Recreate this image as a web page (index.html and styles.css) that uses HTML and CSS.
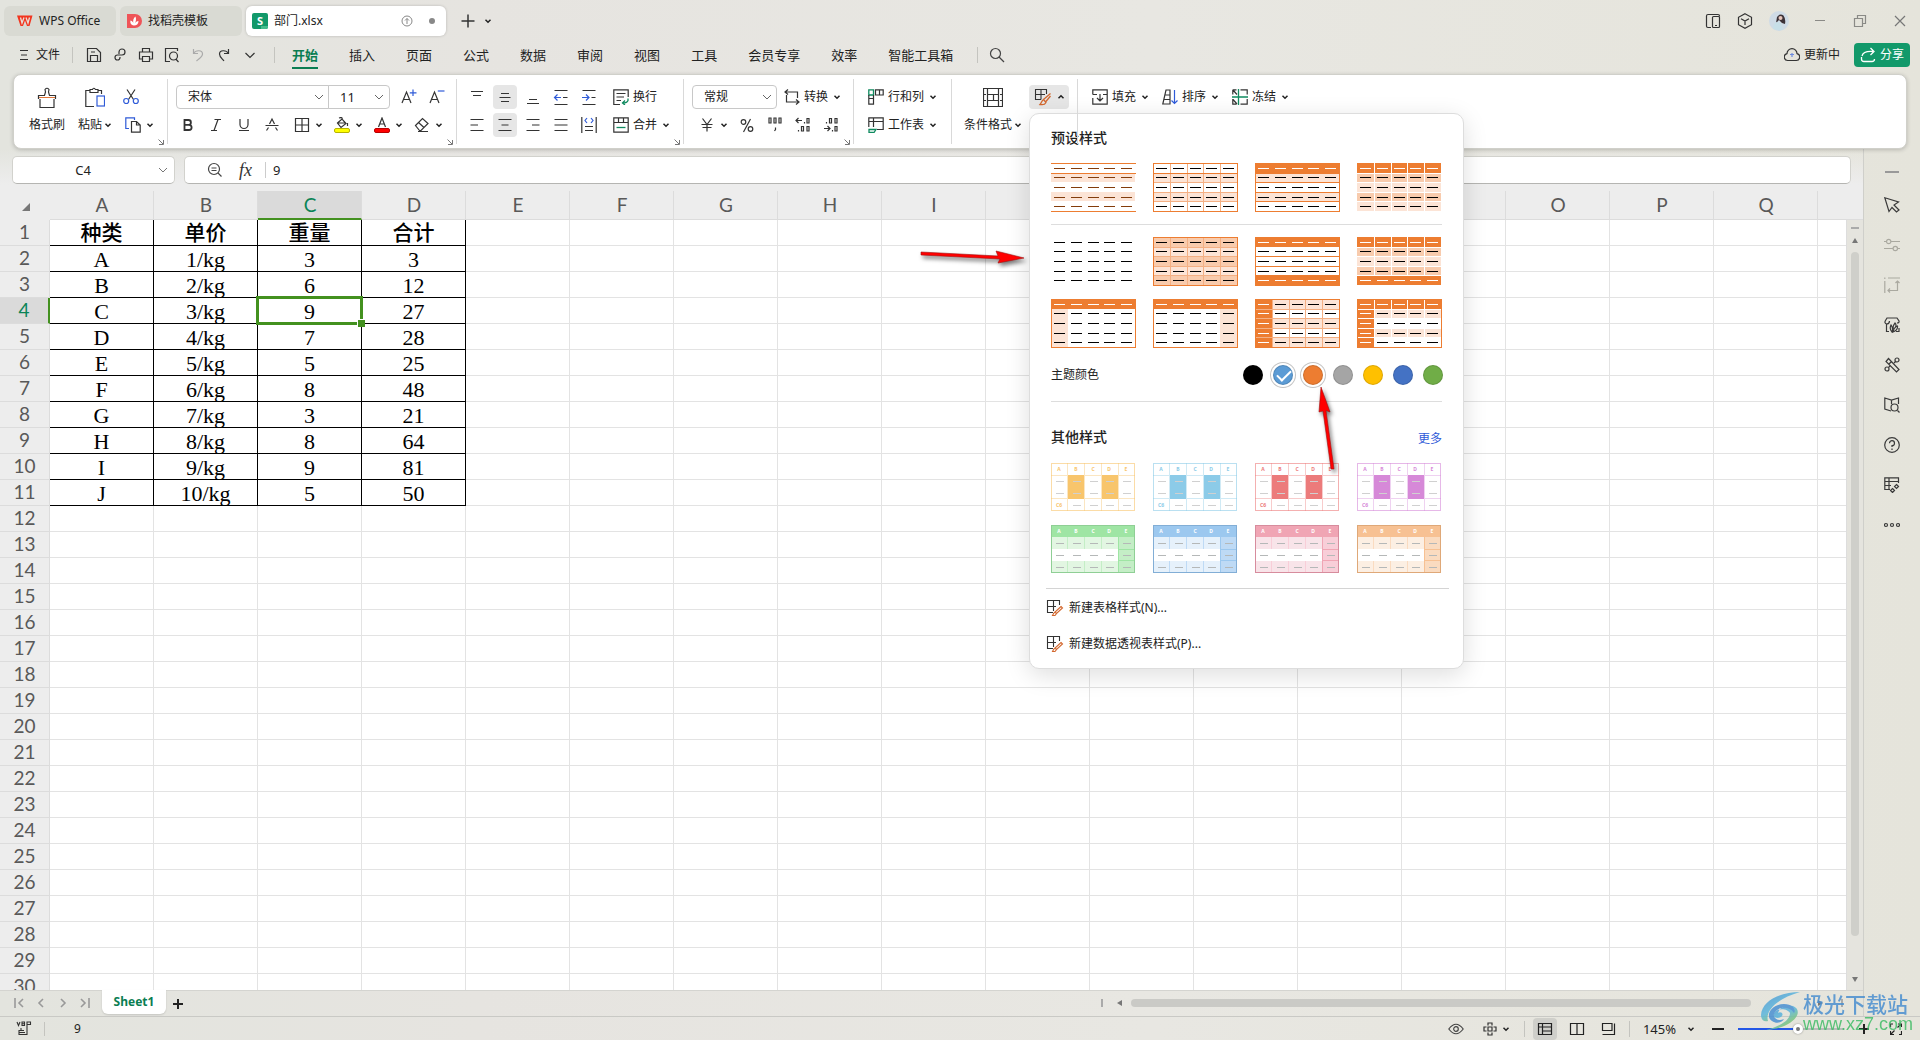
FILE: index.html
```html
<!DOCTYPE html>
<html lang="zh-CN">
<head>
<meta charset="utf-8">
<title>部门.xlsx</title>
<meta name="viewport" content="width=device-width, initial-scale=1">
<link rel="stylesheet" href="styles.css">
</head>
<body>
<svg class="defs" width="0" height="0" aria-hidden="true">
  <symbol id="caret" viewBox="0 0 8 8"><path d="M1.5 2.8 4 5.2 6.5 2.8" fill="none" stroke="currentColor" stroke-width="1.5"/></symbol>
  <symbol id="chev" viewBox="0 0 12 12"><path d="M2 4 6 8 10 4" fill="none" stroke="currentColor"/></symbol>
  <symbol id="corner" viewBox="0 0 8 8"><path d="M1.500 1.500 6 6M6.500 2V6.500H2" fill="none" stroke="#777"/></symbol>
  <symbol id="tablebrush" viewBox="0 0 18 18"><path d="M7 11.500H1.500V1.500H12.500V6M1.500 6.500H11M7 1.500V11.500" fill="none" stroke="#333" stroke-width="1.100"/><path d="M16.500 5.500 9.500 11.500M16.500 8 11.500 14M9.500 11.500 12 14.500C11 16.500 8.500 17 6 16.500 7.500 15 7.500 13 9.500 11.500Z" fill="none" stroke="#d3682f" stroke-width="1.300"/></symbol>
  <symbol id="tablepen" viewBox="0 0 18 18"><path d="M7 13.500H1.500V1.500H13.500V6M1.500 7.500H10M7.500 1.500V12" fill="none" stroke="#333" stroke-width="1.100"/><path d="M15 7.500 16.500 9 10.500 14.500 9 13ZM9 13 10.500 14.500 9 16.500H6.500Q7.500 14 9 13Z" fill="none" stroke="#d3682f" stroke-width="1.100"/></symbol>
</svg>

<header class="titlebar">
  <nav class="doctabs" aria-label="文档">
    <button class="doctab doctab-home"><svg class="i16" viewBox="0 0 16 16"><path d="M0 2.500H15.500L12.500 13H10L8 7.500 6 13H3.500Z" fill="#f2351f"/><path d="M3.500 4.500 5 10 7 4.500M9 4.500 11 10 12.500 4.500" fill="none" stroke="#e9e0d8" stroke-width="1.300"/></svg>WPS Office</button>
    <button class="doctab doctab-docer"><svg class="i16" viewBox="0 0 16 16"><path d="M1 1H9A7 7 0 0 1 9 15H1Z" fill="#ef5458"/><path d="M8 12.500C4.500 12 4 9.500 4.500 7.500 6.500 8 7.500 9.500 7.500 11 6.500 7.500 7.500 5 9.500 3.500 10.500 6 10 9 8.500 11 9.500 9 11 8 12.500 8 12.500 11 10.500 12.500 8 12.500Z" fill="#fff"/></svg>找稻壳模板</button>
    <button class="doctab doctab-active"><svg class="i16" viewBox="0 0 16 16"><rect width="16" height="16" rx="2" fill="#12996a"/><path d="M9 13H16V14Q16 16 14 16H9Z" fill="#45bd8d"/><text x="8" y="12" text-anchor="middle" class="logo-s">S</text></svg><span class="doctab-name">部门.xlsx</span><svg class="i12" viewBox="0 0 12 12" fill="none" stroke="#888"><circle cx="6" cy="6" r="5"/><path d="M6 9V3.500M4 5.500 6 3.500 8 5.500"/></svg><span class="dot"></span></button>
  </nav>
  <button class="tb" aria-label="新建"><svg class="i16" viewBox="0 0 16 16"><path d="M8 1.500V14.500M1.500 8H14.500" stroke="#333" stroke-width="1.500"/></svg></button>
  <svg class="i8"><use href="#caret"/></svg>
  <div class="window">
    <button class="tb" aria-label="侧窗"><svg class="i16" viewBox="0 0 16 16" fill="none" stroke="#333" stroke-width="1.200"><path d="M6 14.500H3Q1.500 14.500 1.500 13V3Q1.500 1.500 3 1.500H13Q14.500 1.500 14.500 3V3.500"/><rect x="7.500" y="3.500" width="7" height="11" rx="1"/><path d="M10 12.500H12"/></svg></button>
    <button class="tb" aria-label="应用"><svg class="i16" viewBox="0 0 16 16" fill="none" stroke="#333" stroke-width="1.200"><path d="M8 .8 14.500 4.300V11.700L8 15.200 1.500 11.700V4.300ZM4 5.800 8 8 12 5.800M8 8V12"/></svg></button>
    <button class="tb avatar" aria-label="账户"><svg width="20" height="20" viewBox="0 0 20 20"><circle cx="10" cy="10" r="10" fill="#cfdbe6"/><path d="M8 6Q11 2 14.500 4.500 17 8 16 13L13 12 10 9 7 12Z" fill="#3c3238"/><circle cx="11.500" cy="7" r="2" fill="#e6c6bd"/><path d="M4 18Q4 12 8 11L12 12 14 18.500Q10 20 4 18Z" fill="#c7dfe8"/></svg></button>
    <button class="tb wc" aria-label="最小化"><svg class="i16" viewBox="0 0 16 16"><path d="M3 7.500H13" stroke="#8a8a86"/></svg></button>
    <button class="tb wc" aria-label="还原"><svg class="i16" viewBox="0 0 16 16" fill="none" stroke="#8a8a86" stroke-width="1.200"><path d="M2.500 5.500H10.500V13.500H2.500ZM5.500 5.500V2.500H13.500V10.500H10.500"/></svg></button>
    <button class="tb wc" aria-label="关闭"><svg class="i16" viewBox="0 0 16 16"><path d="M3 3 13 13M13 3 3 13" stroke="#777" stroke-width="1.200"/></svg></button>
  </div>
</header>

<div class="menubar">
  <button class="file"><svg class="i12" viewBox="0 0 12 12"><path d="M2 1.500H10M3 6H9M2 10.500H10" stroke="#333"/></svg>文件</button>
  <span class="vsep"></span>
  <div class="quick">
    <button aria-label="保存"><svg class="i16" viewBox="0 0 16 16"><path d="M1.500 1.500H10.500L14.500 5.500V14.500H1.500ZM4.500 14V8.500H11.500V14M5 5H9"/></svg></button>
    <button aria-label="输出"><svg class="i16" viewBox="0 0 16 16"><path d="M7 7V5A3 3 0 1 1 10 8H5.500A2.500 2.500 0 1 0 8 10.500V10"/></svg></button>
    <button aria-label="打印"><svg class="i16" viewBox="0 0 16 16"><path d="M4.500 5V1.500H11.500V5M4 12H1.500V5H14.500V12H12M4.500 9.500H11.500V14.500H4.500Z"/></svg></button>
    <button aria-label="打印预览"><svg class="i16" viewBox="0 0 16 16"><path d="M6 14.500H1.500V1.500H13.500V4M11.800 12 14.500 15"/><circle cx="9.500" cy="9" r="4"/></svg></button>
    <button class="off" aria-label="撤销"><svg class="i16" viewBox="0 0 16 16"><path d="M3.500 2V6.500H8M3.500 6.500C6 2.500 12.500 3 12.500 7 12.500 10 9 11.500 6.500 14"/></svg></button>
    <button aria-label="恢复"><svg class="i16" viewBox="0 0 16 16"><path d="M12.500 2V6.500H8M12.500 6.500C10 2.500 3.500 3 3.500 7 3.500 10 6 11.500 8 14"/></svg></button>
    <button aria-label="更多命令"><svg class="i16" viewBox="0 0 16 16"><path d="M3.500 6 8 10.500 12.500 6"/></svg></button>
  </div>
  <span class="vsep"></span>
  <nav class="menus" aria-label="菜单">
    <a href="#" class="on">开始</a><a href="#">插入</a><a href="#">页面</a><a href="#">公式</a><a href="#">数据</a><a href="#">审阅</a><a href="#">视图</a><a href="#">工具</a><a href="#">会员专享</a><a href="#">效率</a><a href="#">智能工具箱</a>
  </nav>
  <span class="vsep"></span>
  <button class="tb search" aria-label="搜索"><svg class="i16" viewBox="0 0 16 16" fill="none" stroke="#444" stroke-width="1.200"><circle cx="6.500" cy="6.500" r="5"/><path d="M10 10 15 15"/></svg></button>
  <div class="cloud"><svg class="i16" viewBox="0 0 16 16" fill="none" stroke="#333" stroke-width="1.200"><path d="M4 13.500A3.500 3.500 0 0 1 3 6.600 5 5 0 0 1 13 6.600 3.500 3.500 0 0 1 12 13.500Z"/><path d="M8 6V10M6 7.500H10" stroke="#6d8be0"/></svg>更新中</div>
  <button class="share"><svg class="i16" viewBox="0 0 16 16" fill="none" stroke="#fff" stroke-width="1.300"><path d="M1.500 10V12Q1.500 14.500 4 14.500H12Q14.500 14.500 14.500 12M2 9C3 5 7 4 13 4.500M10.500 1 14 4.500 10.500 8"/></svg>分享</button>
</div>

<section class="ribbon" aria-label="开始">
  <div class="group g-clip">
    <button class="big"><svg width="20" height="22" viewBox="0 0 20 22"><path d="M1.500 12V8.500H7.500L8.500 5 8 2.500Q10 0 12 2.500L11.500 5 12.500 8.500H18.500V12M3 12V20.500H17V12" class="k"/><path d="M2 10.500H18" stroke="#e0763a"/></svg><span>格式刷</span></button>
    <button class="big big-paste"><svg width="20" height="22" viewBox="0 0 20 22"><path d="M5 3.500H.8V19.500H9M13 3.500H16.500V7M5 5.500V2.500H7.500Q8.500 0 10.500 2.500H13V5.500Z" class="k"/><rect x="12" y="9" width="7.500" height="10" class="b"/></svg><span>粘贴<svg class="i8"><use href="#caret"/></svg></span></button>
    <div class="rows">
      <div class="row"><button class="tool" aria-label="剪切"><svg class="i16" viewBox="0 0 16 16"><path d="M4 .5 10.500 10.500M12 .5 5.500 10.500" class="k"/><circle cx="3.200" cy="12" r="2.500" class="b"/><circle cx="12.800" cy="12" r="2.500" class="b"/></svg></button></div>
      <div class="row"><button class="tool wide" aria-label="复制"><svg class="i16" viewBox="0 0 16 16"><path d="M4 11.500H.8V.8H9.500V3" class="b"/><path d="M6.500 4.500H11.500L15.200 8V15.200H6.500ZM11.500 4.500V8H15" class="k"/></svg><svg class="i8"><use href="#caret"/></svg></button></div>
    </div>
    <svg class="corner"><use href="#corner"/></svg>
  </div>

  <div class="group g-font">
    <div class="rows">
      <div class="row row-combos">
        <span class="combo combo-font"><select aria-label="字体"><option>宋体</option></select><svg class="i12"><use href="#chev"/></svg></span>
        <span class="combo combo-size"><select aria-label="字号"><option>11</option></select><svg class="i12"><use href="#chev"/></svg></span>
        <button class="tool" aria-label="增大字号"><svg class="i16" viewBox="0 0 16 16"><path d="M1 14 5.500 3 10 14M2.500 10.500H8.500" class="k"/><path d="M12 .5V7M8.800 3.800H15.500" class="b"/></svg></button>
        <button class="tool" aria-label="减小字号"><svg class="i16" viewBox="0 0 16 16"><path d="M1 14 5.500 3 10 14M2.500 10.500H8.500" class="k"/><path d="M8.800 2H15.500" class="b"/></svg></button>
      </div>
      <div class="row">
        <button class="tool" aria-label="加粗"><svg class="i16" viewBox="0 0 16 16"><path d="M4.500 3H8.500A2.400 2.400 0 0 1 8.500 7.800H4.500ZM4.500 7.800H9A2.600 2.600 0 0 1 9 13H4.500Z" fill="none" stroke="#333" stroke-width="1.800"/></svg></button>
        <button class="tool" aria-label="倾斜"><svg class="i16" viewBox="0 0 16 16"><path d="M6.500 2.500H13M3 13.500H9M10 2.500 6 13.500" class="k"/></svg></button>
        <button class="tool" aria-label="下划线"><svg class="i16" viewBox="0 0 16 16"><path d="M4 2V7.500A4 4 0 0 0 12 7.500V2M3 13.500H13" class="k"/></svg></button>
        <button class="tool" aria-label="删除线"><svg class="i16" viewBox="0 0 16 16"><path d="M1.500 8.500H14.500M5.500 7 8 2 10.500 7M4.500 10.500 2.500 13.500M11.500 10.500 13.500 13.500" class="k"/></svg></button>
        <button class="tool wide" aria-label="边框"><svg class="i16" viewBox="0 0 16 16"><path d="M1.500 1.500H14.500V14.500H1.500ZM8 1.500V14.500M1.500 8H14.500" class="k"/></svg><svg class="i8"><use href="#caret"/></svg></button>
        <button class="tool wide" aria-label="填充颜色"><svg class="i16" viewBox="0 0 16 16"><path d="M3.500 6 8 2 12 6.500 7 10.500ZM3.500 6H12M5 1Q9-.5 8 3M13.500 6V9" class="k"/><rect x=".5" y="11.500" width="15" height="4" rx="1.500" fill="#ff0" stroke="#b8b400"/></svg><svg class="i8"><use href="#caret"/></svg></button>
        <button class="tool wide" aria-label="字体颜色"><svg class="i16" viewBox="0 0 16 16"><path d="M4.500 10 8 1 11.500 10M5.500 7H10.500" class="k"/><rect x=".5" y="11.500" width="15" height="4" rx="1.500" fill="#f00" stroke="#b80000"/></svg><svg class="i8"><use href="#caret"/></svg></button>
        <button class="tool wide" aria-label="清除"><svg class="i16" viewBox="0 0 16 16"><path d="M1.500 8.500 8.500 1.500 14 6.500 7 13.500H5.500ZM4.500 5.500 10 10.500M4 14.500H14" class="k"/></svg><svg class="i8"><use href="#caret"/></svg></button>
      </div>
    </div>
    <svg class="corner"><use href="#corner"/></svg>
  </div>

  <div class="group g-align">
    <div class="rows">
      <div class="row">
        <button class="tool" aria-label="顶端对齐"><svg class="i16" viewBox="0 0 16 16"><path d="M2 2.500H14M4 6.500H12" class="k"/></svg></button>
        <button class="tool on" aria-label="垂直居中"><svg class="i16" viewBox="0 0 16 16"><path d="M4 4.500H12M2.500 8.500H13.500M4 12.500H12" class="k"/></svg></button>
        <button class="tool" aria-label="底端对齐"><svg class="i16" viewBox="0 0 16 16"><path d="M4 10.500H12M2 14.500H14" class="k"/></svg></button>
        <button class="tool" aria-label="减少缩进"><svg class="i16" viewBox="0 0 16 16"><path d="M1.500 1.500H14.500M10 8.500H14.500M1.500 15.500H14.500" class="k"/><path d="M1.500 8.500H8M4.500 5.500 1.500 8.500 4.500 11.500" class="b"/></svg></button>
        <button class="tool" aria-label="增加缩进"><svg class="i16" viewBox="0 0 16 16"><path d="M1.500 1.500H14.500M10.500 8.500H14.500M1.500 15.500H14.500" class="k"/><path d="M1 8.500H8M5 5.500 8 8.500 5 11.500" class="b"/></svg></button>
        <button class="tool txt"><svg class="i16" viewBox="0 0 16 16"><path d="M7 15.500H.8V.8H15.200V8M3.500 4.500H12.500M3.500 8H11M3.500 11.500H8" class="k"/><path d="M15 9.500V11.500Q14 14 10 14M12 11.500 9.500 14 12 16" class="g"/></svg>换行</button>
      </div>
      <div class="row">
        <button class="tool" aria-label="左对齐"><svg class="i16" viewBox="0 0 16 16"><path d="M1.500 2.500H14.500M1.500 8H9M1.500 13.500H14.500" class="k"/></svg></button>
        <button class="tool on" aria-label="水平居中"><svg class="i16" viewBox="0 0 16 16"><path d="M1.500 2.500H14.500M4.500 8H11.500M1.500 13.500H14.500" class="k"/></svg></button>
        <button class="tool" aria-label="右对齐"><svg class="i16" viewBox="0 0 16 16"><path d="M1.500 2.500H14.500M7 8H14.500M1.500 13.500H14.500" class="k"/></svg></button>
        <button class="tool" aria-label="两端对齐"><svg class="i16" viewBox="0 0 16 16"><path d="M1.500 2.500H14.500M1.500 8H14.500M1.500 13.500H14.500" class="k"/></svg></button>
        <button class="tool" aria-label="分散对齐"><svg class="i16" viewBox="0 0 16 16"><path d="M.8 0V16M15.200 0V16M4 9.500H12M4 13.500H12" class="k"/><path d="M6 1 4 3.500 6 6M10 1 12 3.500 10 6" class="b"/></svg></button>
        <button class="tool txt"><svg class="i16" viewBox="0 0 16 16"><path d="M.8 .8H15.200V15.200H.8ZM.8 5.500H15.200M5.500 .8V5.500M10.500 .8V5.500" class="k"/><path d="M3.500 10.500H12.500" class="g"/></svg>合并<svg class="i8"><use href="#caret"/></svg></button>
      </div>
    </div>
    <svg class="corner"><use href="#corner"/></svg>
  </div>

  <div class="group g-num">
    <div class="rows">
      <div class="row row-combos">
        <span class="combo combo-num"><select aria-label="数字格式"><option>常规</option></select><svg class="i12"><use href="#chev"/></svg></span>
        <button class="tool txt conv"><svg class="i16" viewBox="0 0 16 16"><path d="M4 .5 1 3 4 5.500M1 3H13.500V9M2.500 6V13H15M12 10.500 15 13 12 15.500" class="k"/></svg>转换<svg class="i8"><use href="#caret"/></svg></button>
      </div>
      <div class="row">
        <button class="tool wide money" aria-label="货币"><svg class="i16" viewBox="0 0 16 16"><path d="M3.500 1.500 8 7.500 12.500 1.500M2.500 7.500H13.500M3.500 10.500H12.500M8 7.500V14.500" class="k"/></svg><svg class="i8"><use href="#caret"/></svg></button>
        <button class="tool" aria-label="百分比"><svg class="i16" viewBox="0 0 16 16"><circle cx="4.500" cy="5" r="2.300" class="k"/><circle cx="11.500" cy="12" r="2.300" class="k"/><path d="M11.500 2 4.500 15" class="k"/></svg></button>
        <button class="tool" aria-label="千位分隔"><svg class="i16" viewBox="0 0 16 16"><path d="M2 1H4V6H2ZM7 1H9V6H7ZM12 1H14V6H12ZM8.500 10.500V12.500L7.500 14" class="k"/></svg></button>
        <button class="tool" aria-label="增加小数"><svg class="i16" viewBox="0 0 16 16"><path d="M1 3.500H7M3.500 1 1 3.500 3.500 6M12 1.500H14V6H12ZM6.500 9.500H8.500V14H6.500ZM12 9.500H14V14H12ZM9.500 5V6.500M3.500 13V14.500" class="k"/></svg></button>
        <button class="tool" aria-label="减少小数"><svg class="i16" viewBox="0 0 16 16"><path d="M1 11.500H7M4.500 9 7 11.500 4.500 14M12 9.500H14V14H12ZM6.500 1.500H8.500V6H6.500ZM12 1.500H14V6H12ZM9.500 13V14.500M3.500 5V6.500" class="k"/></svg></button>
      </div>
    </div>
    <svg class="corner"><use href="#corner"/></svg>
  </div>

  <div class="group g-rc">
    <div class="rows">
      <div class="row"><button class="tool txt"><svg class="i16" viewBox="0 0 16 16"><path d="M.8 .8H5.500V6H.8Z" class="g"/><path d="M.8 9.500H5.500V15.200H.8ZM.8 6V9.500M5.500 6V9.500M7.500 .8H15.200V6H7.500ZM11.500 .8V6" class="k"/></svg>行和列<svg class="i8"><use href="#caret"/></svg></button></div>
      <div class="row"><button class="tool txt"><svg class="i16" viewBox="0 0 16 16"><path d="M9 12.500H15.200V.8H.8V10M.8 4.500H15.200M5.500 .8V10" class="k"/><path d="M1 12.500H8L6 15.500H1Z" class="g"/></svg>工作表<svg class="i8"><use href="#caret"/></svg></button></div>
    </div>
  </div>

  <div class="group g-style">
    <button class="big big-cond"><svg width="20" height="22" viewBox="0 0 20 22"><path d="M4 1.500H.5V19.500H4M16 1.500H19.500V19.500H16M4.500 1.500H15.500V19.500H4.500ZM4.500 7.500H15.500M4.500 13.500H15.500M10.500 7.500V13.500M1 7.500H3M1 13.500H3M17 7.500H19M17 13.500H19" class="k"/></svg><span>条件格式<svg class="i8"><use href="#caret"/></svg></span></button>
    <div class="menu-anchor">
      <button class="tool wide on" aria-label="表格样式" aria-expanded="true"><svg width="18" height="18"><use href="#tablebrush"/></svg><svg class="i8 up"><use href="#caret"/></svg></button>
      <div class="panel">
        <div class="panel-in">
          <h2>预设样式</h2>
          <div class="thumbs" data-set="preset"></div>
          <hr>
          <div class="thumbs" data-set="more"></div>
          <div class="theme">
            <span>主题颜色</span>
            <div class="dots">
              <input type="radio" name="theme" aria-label="黑色" class="c-black"><input type="radio" name="theme" aria-label="蓝色" class="c-sky ring" checked><input type="radio" name="theme" aria-label="橙色" class="c-orange ring"><input type="radio" name="theme" aria-label="灰色" class="c-gray"><input type="radio" name="theme" aria-label="金色" class="c-gold"><input type="radio" name="theme" aria-label="深蓝" class="c-blue"><input type="radio" name="theme" aria-label="绿色" class="c-green">
            </div>
          </div>
          <hr>
          <div class="other"><h2>其他样式</h2><a href="#">更多</a></div>
          <div class="thumbs" data-set="other"></div>
        </div>
        <div class="panel-foot">
          <button><svg width="18" height="18"><use href="#tablepen"/></svg>新建表格样式(N)...</button>
          <button><svg width="18" height="18"><use href="#tablepen"/></svg>新建数据透视表样式(P)...</button>
        </div>
      </div>
    </div>
  </div>

  <div class="group g-edit">
    <div class="rows">
      <div class="row">
        <button class="tool txt"><svg class="i16" viewBox="0 0 16 16"><path d="M.8 5.500V.8H15.200V15.200H.8V9M.8 5.500H5M11 5.500H15.200M8 5V12M5 9 8 12 11 9" class="k"/></svg>填充<svg class="i8"><use href="#caret"/></svg></button>
        <button class="tool txt"><svg class="i16" viewBox="0 0 16 16"><path d="M.8 15 4 1H8V15ZM3.500 6H8M2.500 10.500H8" class="k"/><path d="M12.500 1V14M9.500 11.500 12.500 14.500 15.500 11.500" class="b"/></svg>排序<svg class="i8"><use href="#caret"/></svg></button>
        <button class="tool txt"><svg class="i16" viewBox="0 0 16 16"><path d="M.8 .8H4.500M8.500 .8H15.200V5.500M15.200 10V15.200H8.500M.8 .8V5.500M.8 10V15.200H4.500M1 1 5 5.500M1 10.500 5 15" class="k"/><path d="M0 8H16M6.500 0V16" class="g"/></svg>冻结<svg class="i8"><use href="#caret"/></svg></button>
      </div>
    </div>
  </div>
</section>

<main class="work">
  <div class="book">
    <div class="formula">
      <label class="namebox"><input aria-label="名称框" value="C4"><svg class="i12"><use href="#chev"/></svg></label>
      <div class="fx">
        <svg class="i16" viewBox="0 0 16 16" fill="none" stroke="#444" stroke-width="1.200"><circle cx="7" cy="7" r="5.500"/><path d="M4.500 6H9.500M4.500 8.500H9.500M11 11 14.500 14.500"/></svg>
        <i class="fx-mark">fx</i>
        <input aria-label="编辑栏" value="9">
      </div>
    </div>
    <div class="sheet">
      <div class="grid"><table id="grid"></table></div>
      <div class="vbar"><span class="split"></span><span class="tri up"></span><span class="thumb"></span><span class="tri down"></span></div>
    </div>
    <div class="sheets">
      <div class="nav">
        <button aria-label="第一个"><svg class="i12" viewBox="0 0 12 12"><path d="M2 1V11M10 2 6 6 10 10"/></svg></button>
        <button aria-label="上一个"><svg class="i12" viewBox="0 0 12 12"><path d="M8 2 4 6 8 10"/></svg></button>
        <button aria-label="下一个"><svg class="i12" viewBox="0 0 12 12"><path d="M4 2 8 6 4 10"/></svg></button>
        <button aria-label="最后一个"><svg class="i12" viewBox="0 0 12 12"><path d="M10 1V11M2 2 6 6 2 10"/></svg></button>
      </div>
      <button class="sheet-tab">Sheet1</button>
      <button class="add" aria-label="新建工作表"><svg class="i12" viewBox="0 0 12 12"><path d="M6 1V11M1 6H11" stroke="#222" stroke-width="2"/></svg></button>
      <div class="hbar"><span class="split"></span><span class="tri left"></span><span class="thumb"></span><span class="tri right"></span><span class="split"></span></div>
    </div>
  </div>
  <aside class="side">
    <span class="side-grip"></span>
    <button aria-label="选择"><svg class="i16" viewBox="0 0 16 16"><path d="M.8 .8 14.500 5 10 8 15 13 12.500 15 8 10.500 5 14.500Z"/></svg></button>
    <button class="off" aria-label="属性"><svg class="i16" viewBox="0 0 16 16"><path d="M0 4.500H2.500M7 4.500H16M0 11.500H9M13.500 11.500H16"/><circle cx="4.700" cy="4.500" r="2.200"/><circle cx="11.300" cy="11.500" r="2.200"/></svg></button>
    <button class="off" aria-label="透视"><svg class="i16" viewBox="0 0 16 16"><path d="M.8 4V16M4 1H16M.8 .5V2M13.500 4V13.500H4M11.500 6 13.500 4 15.500 6M6 11.500 4 13.500 6 15.500"/></svg></button>
    <button aria-label="稻壳"><svg class="i16" viewBox="0 0 16 16"><path d="M2.500 7V14.500H5M2.500 7Q0 6 1.500 3.500L3 1H13L15 4Q15.500 6 13 6M2.500 7Q5.500 7 5.500 4M8 15Q5 12 7 8 9.500 11 8 15ZM9 15Q10 10 13.500 9 14 13 9 15ZM9 12Q9 8 11 6 13 8 11 11M12 14.500H15V11"/></svg></button>
    <button aria-label="工具"><svg class="i16" viewBox="0 0 16 16"><path d="M4.500 1.500 15 12.500 12.500 15 2 4.500ZM5 7 7.500 4.500"/><circle cx="13" cy="3" r="2"/><circle cx="3" cy="12" r="2"/><path d="M11.500 4.500 10 6M4.500 10.500 6 9"/></svg></button>
    <button aria-label="阅读"><svg class="i16" viewBox="0 0 16 16"><path d="M7 14 .8 12V1L7.500 3 14.500 1V7M7.500 3V7M13.500 13.500 15.500 15.500"/><circle cx="10.500" cy="10.500" r="3.500"/></svg></button>
    <button aria-label="帮助"><svg class="i16" viewBox="0 0 16 16"><circle cx="8" cy="8" r="7.300"/><path d="M5.500 6.200A2.500 2.500 0 1 1 8 8.700V10M8 11.500V13"/></svg></button>
    <button aria-label="智能表格"><svg class="i16" viewBox="0 0 16 16"><path d="M6 12.500H.8V.8H14.500V6M.8 4.500H14.500M.8 8.500H7M5 .8V12.500M8.500 11.500 10.500 13.500 8.500 15.500 6.500 13.500ZM12.500 7.500 14.500 9.500 12.500 11.500 10.500 9.500Z"/></svg></button>
    <button aria-label="更多"><svg class="i16" viewBox="0 0 16 16"><circle cx="2" cy="8" r="1.500"/><circle cx="8" cy="8" r="1.500"/><circle cx="14" cy="8" r="1.500"/></svg></button>
  </aside>
</main>

<footer class="status">
  <svg class="i16" viewBox="0 0 16 16" fill="none" stroke="#333" stroke-width="1.100"><path d="M1 1 2.500 4.500 4 1M6 1V4.500H8.500V1ZM6 2.800H8.500M11 6V1H14.500V3.500H11M11 5V13.500H3V9.500H8M5 9.500V7M3 11.500H9"/></svg>
  <span class="vsep"></span>
  <span class="sum">9</span>
  <div class="views">
    <button class="tb v-eye" aria-label="护眼"><svg class="i16" viewBox="0 0 16 16" fill="none" stroke="#444" stroke-width="1.200"><path d="M.8 8Q8-1.500 15.200 8 8 17.500 .8 8Z"/><circle cx="8" cy="8" r="2.300"/></svg></button>
    <button class="tb v-cross" aria-label="阅读模式"><svg class="i16" viewBox="0 0 16 16" fill="none" stroke="#333" stroke-width="1.200"><path d="M6 6H10V10H6ZM6 4.500V2H10V4.500M6 11.500V14H10V11.500M4.500 6H2V10H4.500M11.500 6H14V10H11.500"/></svg><svg class="i8"><use href="#caret"/></svg></button>
    <span class="vsep"></span>
    <button class="tb vw on" aria-label="普通视图"><svg class="i16" viewBox="0 0 16 16" fill="none" stroke="#222" stroke-width="1.200"><path d="M1.500 2.500H14.500V13.500H1.500ZM1.500 6H14.500M5.500 2.500V13.500M5.500 10H14.500"/></svg></button>
    <button class="tb vw" aria-label="分页预览"><svg class="i16" viewBox="0 0 16 16" fill="none" stroke="#222" stroke-width="1.200"><path d="M1.500 2.500H14.500V13.500H1.500ZM8 2.500V13.500"/></svg></button>
    <button class="tb vw" aria-label="页面布局"><svg class="i16" viewBox="0 0 16 16" fill="none" stroke="#222" stroke-width="1.200"><path d="M1.500 2.500H11V9.500H1.500ZM13.500 2.500V13.500H1.500"/></svg></button>
    <span class="vsep"></span>
    <button class="tb zoomv">145%<svg class="i8"><use href="#caret"/></svg></button>
    <button class="tb" aria-label="缩小"><svg class="i12" viewBox="0 0 12 12"><path d="M0 6H12" stroke="#222" stroke-width="2"/></svg></button>
    <input class="zoom" type="range" min="0" max="100" value="57" aria-label="缩放">
    <button class="tb" aria-label="放大"><svg class="i12" viewBox="0 0 12 12"><path d="M1 6H11M6 1V11" stroke="#222" stroke-width="2"/></svg></button>
    <button class="tb full" aria-label="全屏"><svg class="i12" viewBox="0 0 12 12" fill="none" stroke="#222" stroke-width="1.200"><path d="M7.500 4.500 11 1M8 1H11.500V4M4.500 7.500 1 11M4 11.500H.5V8M.5 4V1H3M11.500 8V11.500H9"/></svg></button>
  </div>
</footer>

<svg class="arrow arrow-right" width="112" height="24" viewBox="0 0 112 24"><path d="M1 2 78 6 76 1 104 8 78 13 80 9 1 5Z" fill="#f00" stroke="#a01010" stroke-width=".6"/></svg>
<svg class="arrow arrow-up" width="24" height="90" viewBox="0 0 24 90"><path d="M7 1 16 26 12 24.500 20 83 17 83 9 25 5 26Z" fill="#f00" stroke="#a01010" stroke-width=".6"/></svg>

<div class="mark">
  <svg width="42" height="40" viewBox="0 0 42 40"><defs><linearGradient id="mk" x1="0" y1="0" x2=".8" y2="1"><stop offset="0" stop-color="#4a90d2"/><stop offset=".5" stop-color="#5cb6dc"/><stop offset=".8" stop-color="#7cc576"/><stop offset="1" stop-color="#e8e04e"/></linearGradient></defs><path d="M40 1C22 1 2 9 1 24 1 29 4 31 8 30 5 20 16 8 40 1Z" fill="url(#mk)"/><path d="M33 15C45 20 34 37 6 39 18 36 30 30 30 22 28 18 18 16 14 22 12 28 20 28 22 25 24 22 20 20 18 22 20 15 28 14 33 15Z" fill="url(#mk)"/><path d="M12 30C5 26 10 13 24 13 34 13 36 20 34 22 29 14 16 16 14 23 13 27 18 31 24 28 22 32 16 33 12 30Z" fill="#4a90d2"/></svg>
  <div><b>极光下载站</b><span>www.xz7.com</span></div>
</div>
<script src="app.js"></script>
</body>
</html>
```

FILE: styles.css
```css
* { box-sizing: border-box; }
html, body { height: 100%; margin: 0; }
body {
  display: flex; flex-direction: column; overflow: hidden;
  background: linear-gradient(90deg, #e3e4de 0, #e6e4e0 25%, #e8e7e2 60%, #e5e4db 100%);
  color: #222; font: 12px/16px "Noto Sans", "Noto Sans CJK SC", sans-serif;
}
button { border: 0; background: none; padding: 0; margin: 0; font: inherit; color: inherit; display: flex; align-items: center; flex: none; }
a { text-decoration: none; color: inherit; }
svg { display: block; flex: none; }
input, select { font: inherit; color: inherit; border: 0; background: none; outline: 0; padding: 0; margin: 0; min-width: 0; }
.defs { position: absolute; }
.i8 { width: 8px; height: 8px; }
.i12 { width: 12px; height: 12px; }
.i16 { width: 16px; height: 16px; }
.up { transform: rotate(180deg); }
.k { fill: none; stroke: #333; stroke-width: 1.2; }
.b { fill: none; stroke: #2f5bd8; stroke-width: 1.2; }
.g { fill: none; stroke: #0f8a5f; stroke-width: 1.3; }
.tb { justify-content: center; }
.vsep { width: 1px; height: 16px; background: #c4c4bf; flex: none; }

/* title bar */
.titlebar { display: flex; align-items: center; height: 40px; padding: 2px 0 0 4px; flex: none; }
.doctabs { display: flex; gap: 4px; margin-right: 14px; }
.doctab { height: 30px; border-radius: 6px; background: #d9dad3; gap: 6px; padding: 0 8px; }
.doctab-home { width: 112px; padding-left: 13px; }
.doctab-docer { width: 122px; padding-left: 6px; }
.doctab-active { width: 200px; background: #fff; padding-left: 6px; box-shadow: 0 0 3px #0003; gap: 6px; }
.doctab-name { flex: 1; text-align: left; }
.logo-s { font: bold 11px "Noto Sans", sans-serif; fill: #fff; }
.dot { width: 6px; height: 6px; border-radius: 3px; background: #888; margin: 0 3px 0 10px; }
.titlebar > .i8 { margin-left: 8px; }
.window { margin-left: auto; display: flex; align-items: center; }
.window .tb { width: 32px; }
.window .avatar { width: 36px; margin-right: 3px; }
.window .wc { width: 40px; }

/* menu bar */
.menubar { display: flex; align-items: center; height: 34px; padding: 0 10px 4px 18px; flex: none; }
.file { gap: 6px; margin-right: 12px; }
.quick { display: flex; margin: 0 11px 0 8px; }
.quick button { width: 26px; justify-content: center; }
.quick path, .quick circle { fill: none; stroke: #333; stroke-width: 1.2; }
.quick .off path { stroke: #aaa; }
.menus { display: flex; gap: 31px; margin: 2px 24px 0 17px; font-size: 13px; line-height: 20px; }
.menus a { height: 26px; padding-top: 2px; white-space: nowrap; }
.menus .on { color: #0a7d52; font-weight: 700; border-bottom: 2px solid #0a7d52; }
.search { margin-left: 11px; }
.cloud { margin-left: auto; display: flex; align-items: center; gap: 4px; margin-right: 14px; }
.share { width: 56px; height: 24px; border-radius: 4px; background: #12996a; color: #fff; justify-content: center; gap: 4px; }

/* ribbon */
.ribbon { position: relative; z-index: 3; display: flex; height: 75px; margin: 0 13px; flex: none; background: #fff; border: 1px solid #d0d0ca; border-radius: 8px; box-shadow: 0 1px 4px #0003; }
.group { position: relative; display: flex; align-items: flex-start; padding-top: 10px; flex: none; }
.group:not(:last-child)::after { content: ""; position: absolute; right: 0; top: 4px; bottom: 4px; width: 1px; background: #d9d9d9; }
.g-clip { width: 154px; padding-left: 10px; }
.g-font { width: 289px; padding-left: 6px; }
.g-align { width: 227px; padding-left: 6px; }
.g-num { width: 170px; padding-left: 6px; }
.g-rc { width: 98px; padding-left: 4px; }
.g-style { width: 126px; padding-left: 7px; }
.g-edit { padding-left: 4px; }
.g-edit .tool { width: 70px; justify-content: flex-start; }
.corner { position: absolute; right: 3px; bottom: 2px; width: 8px; height: 8px; }
.rows { display: flex; flex-direction: column; gap: 4px; }
.row { display: flex; height: 24px; align-items: center; }
.tool { width: 28px; height: 24px; justify-content: center; border-radius: 4px; white-space: nowrap; }
.tool.on { background: #e6e6e6; width: 24px; margin: 0 2px; }
.tool.wide { width: 40px; gap: 4px; padding-left: 4px; }
.tool.txt { width: auto; gap: 4px; padding-left: 10px; }
.g-edit .tool.txt { width: 70px; }
.tool .i8 { margin-left: 1px; }
.big { flex-direction: column; width: 46px; height: 52px; align-items: center; padding-top: 2px; gap: 6px; }
.big svg + span { height: 20px; display: flex; align-items: center; gap: 2px; white-space: nowrap; line-height: 20px; }
.big-paste { width: 50px; }
.big-cond { width: 68px; margin-right: 2px; }
.big-paste + .rows { margin-left: -3px; }
.row-combos { padding-left: 2px; }
.combo { position: relative; display: flex; align-items: center; height: 24px; border: 1px solid #c8c8c8; border-radius: 4px; }
.combo select { appearance: none; width: 100%; height: 22px; padding-left: 11px; }
.combo .i12 { position: absolute; right: 3px; color: #666; pointer-events: none; }
.combo-font { width: 153px; border-radius: 4px 0 0 4px; }
.combo-size { width: 62px; margin: 0 5px 0 -1px; border-radius: 0 4px 4px 0; }
.combo-size select { font-size: 13px; }
.combo-size .i12 { right: 4px; }
.combo-num { width: 85px; margin-right: -3px; }
.g-num .money { width: 43px; }

/* table style panel */
.menu-anchor { position: relative; }
.menu-anchor .tool.on { width: 40px; margin: 0; padding-left: 0; }
.panel { position: absolute; left: 0; top: 28px; width: 435px; background: #fff; border: 1px solid #ddd; border-radius: 10px; box-shadow: 0 6px 24px #0002; padding-bottom: 6px; }
.panel-in { padding: 14px 21px 14px; }
.panel h2 { margin: 0; font-size: 14px; line-height: 20px; font-weight: 500; }
.panel hr { border: 0; border-top: 1px solid #ddd; margin: 0; }
.thumbs { display: grid; grid-template-columns: repeat(4, 85px); column-gap: 17px; row-gap: 13px; margin: 15px 0 12px; }
.panel hr + .thumbs { margin: 12px 0 17px; }
.thumbs button { display: block; height: 49px; }
.thumb-abc { font: bold 5px "Noto Sans", sans-serif; }
.theme { display: flex; justify-content: space-between; align-items: center; height: 20px; margin-bottom: 16px; }
.dots { display: flex; gap: 10px; margin-right: -1px; }
.dots input { appearance: none; width: 20px; height: 20px; border-radius: 50%; border: 1px solid #0002; background: #000; }
.dots .ring { box-shadow: 0 0 0 2px #fff, 0 0 0 3px #c4c4c4; }
.dots .c-sky { background: #5b9bd5; }
.dots .c-sky:checked::after { content: ""; display: block; width: 12px; height: 6px; margin: 4px 3px; border: solid #fff; border-width: 0 0 2px 2px; transform: rotate(-45deg); }
.dots .c-orange { background: #ed7d31; }
.dots .c-gray { background: #a5a5a5; }
.dots .c-gold { background: #ffc000; }
.dots .c-blue { background: #4472c4; }
.dots .c-green { background: #70ad47; }
.other { display: flex; justify-content: space-between; align-items: flex-end; padding-top: 25px; }
.other a { color: #2f5bd8; }
.other + .thumbs { margin: 16px 0 0; }
.panel-foot { margin: 0 14px 0 16px; border-top: 1px solid #d4d4d4; padding-top: 1px; }
.panel-foot button { height: 36px; gap: 5px; width: 100%; }

/* work area */
.work { display: flex; flex: 1; min-height: 0; }
.book { flex: 1; min-width: 0; display: flex; flex-direction: column; border-right: 1px solid #cfcfca; }
.formula { display: flex; gap: 9px; padding: 7px 12px 7px 12px; flex: none; background: linear-gradient(#0000, #ededed 85%); }
.namebox, .fx { display: flex; align-items: center; height: 28px; background: #fff; border: 1px solid #d2d2cd; border-bottom-color: #b5b5b2; border-radius: 5px; }
.namebox { width: 163px; padding-right: 5px; }
.namebox input { flex: 1; text-align: center; font-size: 13px; padding-right: 4px; }
.namebox svg { color: #777; }
.fx { flex: 1; padding-left: 22px; }
.fx-mark { font: italic 18px/20px "Liberation Serif", serif; margin: 0 13px 0 16px; color: #333; }
.fx input { flex: 1; border-left: 1px solid #ccc; padding-left: 7px; line-height: 16px; font-size: 13px; }
.sheet { display: flex; flex: 1; min-height: 0; background: #ededed; }
.grid { flex: 1; min-width: 0; overflow: hidden; }
#grid { table-layout: fixed; width: 1922px; border-collapse: separate; border-spacing: 0; background: #fff; }
#grid th, #grid td { padding: 0; height: 26px; border: solid #e3e3e3; border-width: 0 1px 1px 0; text-align: center; overflow: hidden; white-space: nowrap; line-height: 24px; }
#grid th { background: #ededed; color: #595959; font: 19px/24px Lato, "Noto Sans", sans-serif; border-color: #dcdcdc; }
#grid thead th { height: 29px; line-height: 28px; padding-left: 1px; }
#grid thead th:first-child { border-color: #ededed; }
#grid tbody th { vertical-align: top; line-height: 24px; }
#grid .sel { background: #dadada; color: #0a8457; }
#grid thead .sel { border-bottom: 2px solid #43911f; line-height: 27px; }
#grid tbody .sel { border-right: 2px solid #43911f; }
#grid .rh { width: 50px; }
#grid .ch { width: 104px; }
#grid .data { border-color: #000; color: #000; font: 22px/23px "Liberation Serif", "Noto Sans CJK SC", serif; padding-top: 2px; }
#grid .head { font-size: 21px; font-weight: 500; }
#grid .cur { position: relative; overflow: visible; }
.cur::before { content: ""; position: absolute; inset: -2px; border: 3px solid #43911f; }
.cur::after { content: ""; position: absolute; right: -4px; bottom: -4px; width: 7px; height: 7px; background: #43911f; border: solid #fff; border-width: 1px 0 0 1px; }
.all { display: block; margin: 4px 0 0 21px; width: 0; border: 4px solid #777; border-left-color: #0000; border-top-color: #0000; }
.vbar { width: 17px; margin-top: 28px; border-top: 1px solid #ddd; border-left: 1px solid #ddd; background: #e5e4de; display: flex; flex-direction: column; align-items: center; padding: 7px 0 8px; flex: none; }
.vbar .split { width: 8px; height: 2px; background: #aaa; }
.vbar .thumb { width: 8px; flex: 1; border-radius: 4px; background: #cfcfca; margin: 9px 0 41px; }
.tri { width: 0; height: 0; border: 3px solid #0000; }
.tri.up { border-top-color: #777; border-top-width: 5px; border-bottom-width: 0; margin-top: 9px; }
.tri.down { border-top-color: #777; border-top-width: 5px; border-bottom-width: 0; }
.sheets { display: flex; align-items: flex-start; height: 26px; border-top: 1px solid #d4d4d0; flex: none; padding-right: 20px; }
.nav { display: flex; align-items: center; gap: 10px; height: 24px; padding: 0 11px 0 13px; }
.nav path { fill: none; stroke: #999; stroke-width: 1.6; }
.sheet-tab { height: 24px; width: 64px; margin-top: -1px; justify-content: center; background: #fff; border-radius: 0 0 6px 6px; color: #0a7d52; font-weight: 700; box-shadow: 0 1px 2px #0002; }
.add { height: 26px; padding-left: 6px; }
.hbar { width: 742px; margin-left: auto; height: 24px; display: flex; align-items: center; gap: 13px; }
.hbar .split { width: 2px; height: 8px; background: #aaa; }
.hbar .tri { border-width: 3px 5px; }
.hbar .left { border-right-color: #777; margin: 0 -4px 0 -4px; }
.hbar .right { border-left-color: #777; margin-left: 54px; }
.hbar .thumb { flex: 1; height: 8px; border-radius: 4px; background: #cacac6; }
.side { width: 56px; display: flex; flex-direction: column; align-items: center; gap: 24px; padding-top: 22px; flex: none; }
.side-grip { width: 14px; height: 2px; background: #999; }
.side path, .side circle { fill: none; stroke: #3a3a3a; stroke-width: 1.2; }
.side .off path, .side .off circle { stroke: #aaa9a0; }

/* status bar */
.status { display: flex; align-items: center; height: 24px; padding: 0 18px 0 16px; border-top: 1px solid #c9c9c5; flex: none; }
.status > .vsep { margin-left: 12px; height: 14px; }
.sum { margin-left: 29px; font-size: 12px; }
.views { margin-left: auto; display: flex; align-items: center; }
.v-cross { margin: 0 14px 0 18px; gap: 4px; }
.vw { width: 24px; height: 22px; margin: 0 4px; border-radius: 4px; }
.views .vsep + .vw { margin-left: 8px; }
.vw.on { background: #cfcfca; }
.vw + .vsep { margin: 0 13px 0 4px; }
.views .zoomv { height: 20px; }
.zoomv { gap: 11px; margin-right: 17px; font-size: 13px; }
.zoom { appearance: none; width: 106px; height: 12px; margin: 0 14px; background: linear-gradient(90deg, #2457e6 57%, #bbb 57%) center / 100% 2px no-repeat; }
.zoom::-webkit-slider-thumb { appearance: none; width: 10px; height: 10px; border-radius: 50%; background: #777; border: 3px solid #fff; box-shadow: 0 0 2px #0006; }
.full { margin-left: 20px; }

/* pointer arrows and site mark over the page */
.arrow { position: absolute; z-index: 5; filter: drop-shadow(2px 3px 2px #0008); overflow: visible; }
.arrow-right { left: 920px; top: 250px; }
.arrow-up { left: 1314px; top: 386px; }
.mark { position: absolute; z-index: 6; right: 11px; bottom: 7px; display: flex; gap: 1px; opacity: .85; pointer-events: none; }
.mark div { display: flex; flex-direction: column; width: 106px; }
.mark b { font: 500 21px/24px "Noto Sans CJK SC", sans-serif; color: #4a8fd0; }
.mark span { font: 18px/18px "Liberation Sans", sans-serif; color: #42bd68; }
```

FILE: app.js
```js
// Spreadsheet contents
const rows = [
  ['种类', '单价', '重量', '合计'],
  ['A', '1/kg', '3', '3'], ['B', '2/kg', '6', '12'], ['C', '3/kg', '9', '27'],
  ['D', '4/kg', '7', '28'], ['E', '5/kg', '5', '25'], ['F', '6/kg', '8', '48'],
  ['G', '7/kg', '3', '21'], ['H', '8/kg', '8', '64'], ['I', '9/kg', '9', '81'],
  ['J', '10/kg', '5', '50']
];
const COLS = 18, ROWS = 30, CUR = { r: 3, c: 2 };
let html = '<thead><tr><th class="rh"><span class="all"></span></th>';
for (let c = 0; c < COLS; c++) {
  const name = c < COLS - 1 ? String.fromCharCode(65 + c) : '';
  html += `<th class="ch${c === CUR.c ? ' sel' : ''}">${name}</th>`;
}
html += '</tr></thead><tbody>';
for (let r = 0; r < ROWS; r++) {
  html += `<tr><th${r === CUR.r ? ' class="sel"' : ''}>${r + 1}</th>`;
  for (let c = 0; c < COLS; c++) {
    const v = rows[r] && rows[r][c];
    const cls = [v && 'data', v && r === 0 && 'head', r === CUR.r && c === CUR.c && 'cur'].filter(Boolean).join(' ');
    html += v ? `<td class="${cls}">${v}</td>` : '<td></td>';
  }
  html += '</tr>';
}
document.getElementById('grid').innerHTML = html + '</tbody>';

// Style previews: five rows of five cells; o = accent, m = mid tint, l = light tint
const FILL = { o: '#ed7d31', m: '#f8cbad', l: '#fce4d6' };
const O = '#ed7d31', T = '#f4b084', W = '#fff';
const X = [0, 17, 34, 50, 67, 84], Y = [0, 10, 19, 29, 38, 48];
const rect = (x, y, w, h, f) => `<rect x="${x}" y="${y}" width="${w}" height="${h}" fill="${f}"/>`;
const button = (label, body) =>
  `<button aria-label="${label}"><svg width="85" height="49" viewBox="0 0 85 49" shape-rendering="crispEdges">${body}</svg></button>`;

function preview(cells, { h = {}, v, frame, ink = '#000', vEnd = 48 }, i) {
  let s = '';
  cells.split(' ').forEach((line, r) => [...line].forEach((k, c) => {
    if (FILL[k]) s += rect(X[c], Y[r], X[c + 1] - X[c], Y[r + 1] - Y[r], FILL[k]);
  }));
  if (v) for (let c = 1; c < 5; c++) s += rect(X[c], 0, 1, vEnd, v);
  for (const r in h) s += rect(0, Y[r], 85, 1, h[r]);
  if (frame) s += `<rect x=".5" y=".5" width="84" height="48" fill="none" stroke="${frame}"/>`;
  cells.split(' ').forEach((line, r) => [...line].forEach((k, c) => {
    s += rect(X[c] + 3, [5, 14, 24, 34, 43][r], 11, 1, k === 'o' ? W : ink);
  }));
  return button('样式 ' + (i + 1), s);
}

const preset = [
  ['..... lllll ..... lllll .....', { h: { 0: O, 1: O, 5: O }, ink: '#833c0b' }],
  ['..... lllll ..... lllll .....', { h: { 1: O, 2: T, 3: T, 4: T }, v: T, frame: O }],
  ['ooooo lllll ..... lllll .....', { h: { 1: O, 2: O, 3: O, 4: O }, frame: O }],
  ['ooooo mmmmm lllll mmmmm lllll', { h: { 1: W, 2: W, 3: W, 4: W }, v: W }]
];
const more = [
  ['..... ..... ..... ..... .....', {}],
  ['mmmmm lllll mmmmm lllll mmmmm', { h: { 1: T, 2: T, 3: T, 4: T }, v: T, frame: O }],
  ['ooooo ..... ..... ..... ooooo', { h: { 2: O, 3: O }, frame: O }],
  ['ooooo mmmmm lllll mmmmm ooooo', { h: { 1: W, 2: W, 3: W, 4: W }, v: W, vEnd: 38 }],
  ['ooooo l.... l.... l.... l....', { frame: O }],
  ['ooooo ....l ....l ....l ....l', { frame: O }],
  ['ollll o.... ollll o.... ollll', { h: { 1: T, 2: T, 3: T, 4: T }, v: T, frame: O }],
  ['ooooo ollll o.... ollll o....', { h: { 1: W, 2: W, 3: W, 4: W }, v: W, frame: O }]
];

function letters(color) {
  return [...'ABCDE'].map((t, c) =>
    `<text class="thumb-abc" x="${X[c] + 8}" y="8" text-anchor="middle" fill="${color}">${t}</text>`).join('');
}
function striped([color, line], i) {
  let s = '';
  [16, 33, 50, 67].forEach(x => { s += rect(x, 0, 1, 48, line); });
  [12, 35].forEach(y => { s += rect(0, y, 84, 1, line); });
  s += rect(17, 12, 16, 24, color) + rect(51, 12, 16, 24, color);
  s += `<rect x=".5" y=".5" width="83" height="47" fill="none" stroke="${color}" stroke-opacity=".6"/>` + letters(color);
  [18, 30, 42].forEach((y, r) => X.slice(0, 5).forEach((x, c) => { if (r < 2 || c) s += rect(x + 5, y, 8, 1, '#d0d0d0'); }));
  s += `<text class="thumb-abc" x="8" y="44" text-anchor="middle" fill="${color}">C6</text>`;
  return button('其他 ' + (i + 1), s);
}
function banded([top, tint, side, edge], i) {
  let s = rect(0, 0, 84, 48, tint) + rect(0, 24, 84, 12, W) + rect(67, 12, 17, 36, side);
  [16, 33, 50].forEach(x => { s += rect(x, 12, 1, 12, side) + rect(x, 36, 1, 12, side); });
  s += rect(67, 24, 17, 1, top) + rect(67, 35, 17, 1, top) + rect(67, 12, 1, 36, top);
  s += rect(0, 0, 84, 12, top) + `<rect x=".5" y=".5" width="83" height="47" fill="none" stroke="${edge}"/>` + letters(W);
  [18, 30, 42].forEach(y => X.slice(0, 5).forEach(x => { s += rect(x + 5, y, 8, 1, '#b5b8b8'); }));
  return button('其他 ' + (i + 5), s);
}
const other = [
  ['#f8c56c', '#fbe6c2'], ['#8ccbe8', '#d0eaf5'], ['#ec7b7b', '#f8cccc'], ['#d689d8', '#efd2f1']
].map(striped).concat([
  ['#9fe5a4', '#e2f6e2', '#c4eec6', '#8fcf95'], ['#9cc8ef', '#e6f1fb', '#bedaf5', '#82aed6'],
  ['#f0a5b4', '#f8e4e9', '#f8ced8', '#d78c9d'], ['#f7c193', '#fcefe3', '#fadbc0', '#dfa878']
].map(banded));

const fill = (set, body) => { document.querySelector(`[data-set="${set}"]`).innerHTML = body; };
fill('preset', preset.map(([c, o], i) => preview(c, o, i)).join(''));
fill('more', more.map(([c, o], i) => preview(c, o, i + 4)).join(''));
fill('other', other.join(''));
```
